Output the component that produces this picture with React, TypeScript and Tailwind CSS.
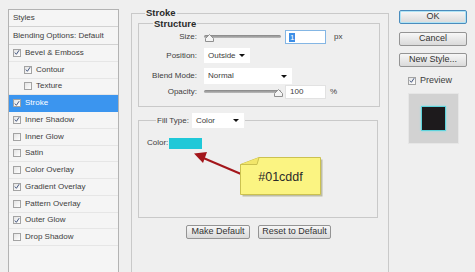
import type { ReactNode } from "react";

type StyleItem = { label: string; checked: boolean; sub?: boolean; active?: boolean };

const STYLE_ITEMS: StyleItem[] = [
  { label: "Bevel & Emboss", checked: true },
  { label: "Contour", checked: true, sub: true },
  { label: "Texture", checked: false, sub: true },
  { label: "Stroke", checked: true, active: true },
  { label: "Inner Shadow", checked: true },
  { label: "Inner Glow", checked: false },
  { label: "Satin", checked: false },
  { label: "Color Overlay", checked: false },
  { label: "Gradient Overlay", checked: true },
  { label: "Pattern Overlay", checked: false },
  { label: "Outer Glow", checked: true },
  { label: "Drop Shadow", checked: false },
];

function Checkbox({ checked }: { checked: boolean }) {
  return (
    <span className="flex h-[8px] w-[8px] shrink-0 items-center justify-center border border-[#a3a3a3] bg-gradient-to-br from-[#e4e4e4] to-[#ffffff]">
      {checked && (
        <svg width="7" height="7" viewBox="0 0 7 7">
          <path d="M1 3.6 L2.8 5.6 L6 0.8" fill="none" stroke="#3a4f7a" strokeWidth="1.1" />
        </svg>
      )}
    </span>
  );
}

function Slider({ at }: { at: "start" | "end" }) {
  return (
    <div className={`relative h-[14px] w-[77px] flex ${at === "start" ? "justify-start" : "justify-end"}`}>
      <div className="mt-[5px] h-[3px] w-full rounded-full bg-gradient-to-b from-[#858585] to-[#bcbcbc]" />
      <svg className={`absolute top-[4px] ${at === "start" ? "left-[1px]" : "right-[-2px]"}`} width="9" height="8" viewBox="0 0 9 8">
        <path d="M4.5 0.5 L8.5 4.5 L8.5 7.5 L0.5 7.5 L0.5 4.5 Z" fill="#f4f4f4" stroke="#8f8f8f" strokeWidth="1" />
      </svg>
    </div>
  );
}

function Dropdown({ value, width, height }: { value: string; width: string; height: string }) {
  return (
    <div className={`flex items-center justify-between bg-white pl-[4px] pr-[5px] ${width} ${height}`}>
      <span>{value}</span>
      <span className="h-0 w-0 border-x-[3px] border-t-[3px] border-x-transparent border-t-[#111]" />
    </div>
  );
}

function Button({ children, width, primary }: { children: ReactNode; width: string; primary?: boolean }) {
  return (
    <div
      className={`flex h-[14px] items-center justify-center rounded-[2px] border bg-gradient-to-b from-[#f7f7f7] to-[#dadada] text-[9px] text-[#333] ${width} ${
        primary ? "border-[#4a8cbd] shadow-[inset_0_0_0_1px_#b0e4f5]" : "border-[#949494]"
      }`}
    >
      {children}
    </div>
  );
}

function FormRow({ label, children, className }: { label: string; children: ReactNode; className: string }) {
  return (
    <div className={`flex items-center ${className}`}>
      <span className="w-[59px] pr-[1px] text-right">{label}</span>
      <div className="ml-[6px] flex items-center">{children}</div>
    </div>
  );
}

export default function App() {
  return (
    <div className="flex h-[272px] w-[475px] overflow-hidden bg-[#efefef] font-['Liberation_Sans',Arial,sans-serif] text-[8px] text-[#3d3d3d]">
      {/* style list */}
      <div className="ml-[8px] mt-[9px] h-[290px] w-[111px] shrink-0 border border-[#b3b3b3] bg-[#f5f5f5]">
        <div className="flex h-[17px] items-center border-b border-[#d2d2d2] pl-[4px]">Styles</div>
        <div className="flex h-[18px] items-center border-b border-[#d2d2d2] pl-[4px]">Blending Options: Default</div>
        {STYLE_ITEMS.map((item) => (
          <div
            key={item.label}
            className={`flex h-[16.75px] items-center gap-[4px] border-b ${
              item.active ? "border-[#3b95ef] bg-[#3b95ef] text-white" : "border-[#e6e6e6]"
            } ${item.sub ? "pl-[15px]" : "pl-[4px]"}`}
          >
            <Checkbox checked={item.checked} />
            <span>{item.label}</span>
          </div>
        ))}
      </div>

      {/* stroke settings */}
      <fieldset className="ml-[12px] mt-[8px] h-[290px] w-[258px] shrink-0 border border-[#c9c9c9]">
        <legend className="ml-[13px] px-[1px] text-[9.5px] font-bold leading-[10px] text-[#2a2a2a]">Stroke</legend>

        <fieldset className="ml-[6px] h-[89px] w-[242px] border border-[#c9c9c9]">
          <legend className="ml-[14px] px-[1px] text-[9.5px] font-bold leading-[11px] text-[#2a2a2a]">Structure</legend>

          <FormRow label="Size:" className="mt-[1px] h-[14px]">
            <Slider at="start" />
            <div className="ml-[4px] flex h-[14px] w-[41px] items-center border border-[#84b6e4] bg-white pl-[3px]">
              <span className="bg-[#3d8ee6] px-[1px] leading-[9px] text-white">1</span>
            </div>
            <span className="ml-[8px]">px</span>
          </FormRow>

          <FormRow label="Position:" className="mt-[4px] h-[15px]">
            <Dropdown value="Outside" width="w-[46px]" height="h-[15px]" />
          </FormRow>

          <FormRow label="Blend Mode:" className="mt-[5px] h-[16px]">
            <Dropdown value="Normal" width="w-[88px]" height="h-[16px]" />
          </FormRow>

          <FormRow label="Opacity:" className="mt-[1px] h-[14px]">
            <Slider at="end" />
            <div className="ml-[4px] flex h-[14px] w-[41px] items-center border border-[#e2e2e2] bg-white pl-[4px]">100</div>
            <span className="ml-[4px]">%</span>
          </FormRow>
        </fieldset>

        <fieldset className="relative ml-[6px] mt-[6px] h-[105px] w-[240px] border border-[#c9c9c9]">
          <legend className="ml-[17px] flex items-center px-[1px]">
            <span>Fill Type:</span>
            <div className="ml-[3px]">
              <Dropdown value="Color" width="w-[52px]" height="h-[15px]" />
            </div>
          </legend>

          <div className="ml-[8px] mt-[9px] flex items-center">
            <span>Color:</span>
            <span className="ml-[1px] h-[11px] w-[33px] bg-[#1fc8d8]" />
          </div>

          {/* callout */}
          <svg className="absolute left-[52px] top-[16px]" width="52" height="34" viewBox="0 0 52 34">
            <line x1="50" y1="30" x2="10" y2="13" stroke="#a3161b" strokeWidth="2" />
            <path d="M3 9.5 L16 8 L12 19 Z" fill="#a3161b" />
          </svg>
          <div className="absolute left-[101px] top-[29px]">
            <svg className="absolute left-0 top-0" width="85" height="40" viewBox="0 0 85 40">
              <path d="M20 2.5 L82.5 2.5 L82.5 39.5 L2.5 39.5 L2.5 8.5 Z" fill="#bdbda6" />
              <path d="M19 0.5 L80.5 0.5 L80.5 37.5 L0.5 37.5 L0.5 7.5 Z" fill="#fbf482" stroke="#cbc150" strokeWidth="1" />
              <path d="M0.5 7.5 L17 7.5 L19 0.5" fill="#f2e66a" stroke="#cbc150" strokeWidth="1" />
            </svg>
            <div className="relative flex h-[38px] w-[81px] items-center justify-center pt-[3px] text-[12.5px] text-[#2a2a2a]">
              #01cddf
            </div>
          </div>
        </fieldset>

        <div className="ml-[54px] mt-[7px] flex gap-[8px]">
          <Button width="w-[64px]">Make Default</Button>
          <Button width="w-[73px]">Reset to Default</Button>
        </div>
      </fieldset>

      {/* actions */}
      <div className="ml-[10px] mt-[10px] flex w-[68px] shrink-0 flex-col">
        <Button width="w-[68px]" primary>
          OK
        </Button>
        <div className="mt-[8px]">
          <Button width="w-[68px]">Cancel</Button>
        </div>
        <div className="mt-[7px]">
          <Button width="w-[68px]">New Style...</Button>
        </div>
        <div className="ml-[9px] mt-[7px] flex items-center gap-[4px] text-[9px]">
          <Checkbox checked />
          <span>Preview</span>
        </div>
        <div className="ml-[9px] mt-[5px] flex h-[51px] w-[51px] items-center justify-center border border-[#e6e6e6] bg-[#d2d2d2]">
          <div className="h-[25px] w-[25px] border border-[#5fd3dc] bg-[#1d1a1c] shadow-[0_0_2px_#7fe3ea]" />
        </div>
      </div>
    </div>
  );
}
